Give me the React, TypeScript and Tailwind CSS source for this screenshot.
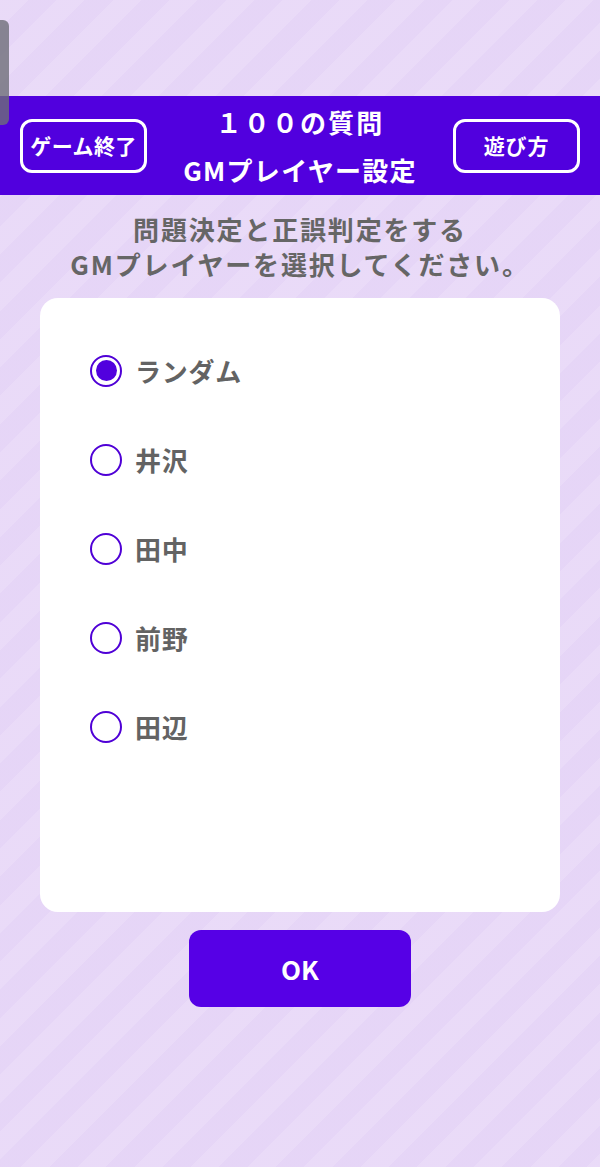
import { useState } from "react";

const players = ["ランダム", "井沢", "田中", "前野", "田辺"];

const font = "font-['Noto_Sans_CJK_JP','Noto_Sans',sans-serif]";

export default function App() {
  const [selected, setSelected] = useState(0);

  return (
    <div
      className={`relative flex min-h-[1167px] w-full flex-col bg-[#e8d8f8] bg-[repeating-linear-gradient(135deg,rgba(255,255,255,0.07)_0px,rgba(255,255,255,0.07)_20px,rgba(190,165,225,0.05)_20px,rgba(190,165,225,0.05)_40px)] ${font}`}
    >
      {/* side tab overlay */}
      <div className="absolute left-0 top-[20px] z-10 h-[105px] w-[9px] rounded-r-[6px] bg-[#6e6e78]/80" />

      <div className="h-[96px]" />

      {/* Header */}
      <header className="flex h-[99px] items-center justify-between bg-[#5100de] px-[20px]">
        <button className="flex h-[54px] w-[127px] items-center justify-center rounded-[12px] border-[3px] border-white text-[21px] font-bold tracking-[0.02em] text-white">
          ゲーム終了
        </button>
        <div className="flex flex-col items-center text-[26px] font-bold leading-[48px] tracking-[0.05em] text-white">
          <span className="tracking-[0.08em]">１００の質問</span>
          <span>GMプレイヤー設定</span>
        </div>
        <button className="flex h-[54px] w-[127px] items-center justify-center rounded-[12px] border-[3px] border-white text-[21px] font-bold tracking-[0.04em] text-white">
          遊び方
        </button>
      </header>

      <div className="mt-[16px] flex flex-col items-center text-[26px] font-bold tracking-[0.07em] text-[#666666]">
        <span className="leading-[35px]">問題決定と正誤判定をする</span>
        <span className="leading-[35px]">GMプレイヤーを選択してください。</span>
      </div>

      {/* Card */}
      <div className="mx-[40px] mt-[17px] h-[614px] rounded-[18px] bg-white px-[50px] pt-[28px]">
        <div className="flex flex-col">
          {players.map((name, i) => (
            <label
              key={name}
              onClick={() => setSelected(i)}
              className="flex h-[89px] cursor-pointer items-center gap-[13px]"
            >
              <span className="flex h-[32px] w-[32px] items-center justify-center rounded-full border-[2.5px] border-[#4f00d6]">
                {selected === i && <span className="h-[21px] w-[21px] rounded-full bg-[#5100de]" />}
              </span>
              <span className="text-[26px] font-bold tracking-[0.03em] text-[#636363]">{name}</span>
            </label>
          ))}
        </div>
      </div>

      <div className="mt-[18px] flex justify-center">
        <button className="flex h-[77px] w-[222px] items-center justify-center rounded-[12px] bg-[#5600e6] text-[26px] font-bold text-white">
          OK
        </button>
      </div>
    </div>
  );
}
